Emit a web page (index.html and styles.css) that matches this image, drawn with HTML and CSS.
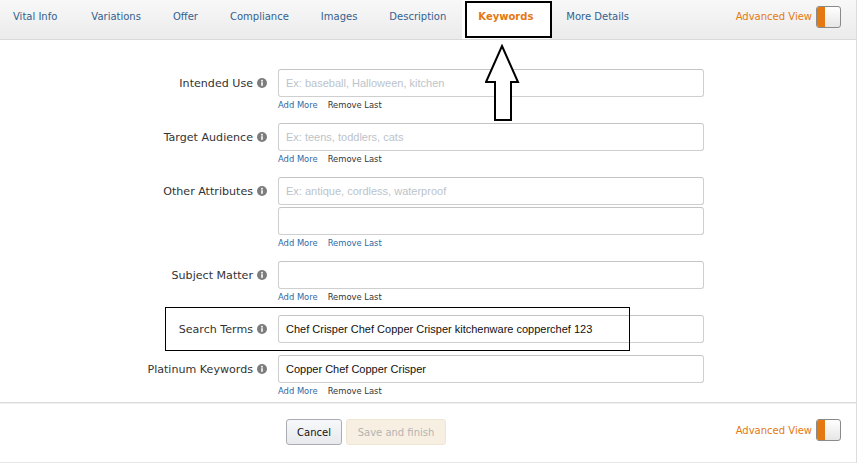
FILE: index.html
```html
<!DOCTYPE html>
<html>
<head>
<meta charset="utf-8">
<link rel="stylesheet" href="styles.css">
</head>
<body>
<div class="page">
  <nav class="tabs">
    <a class="tab">Vital Info</a>
    <a class="tab">Variations</a>
    <a class="tab">Offer</a>
    <a class="tab">Compliance</a>
    <a class="tab">Images</a>
    <a class="tab">Description</a>
    <a class="tab active">Keywords</a>
    <a class="tab">More Details</a>
    <div class="adv"><span class="adv-text">Advanced View</span><span class="toggle"><span class="toggle-on"></span></span></div>
  </nav>

  <section class="form">
    <div class="field">
      <div class="label">Intended Use <svg class="info" viewBox="0 0 10 10"><circle cx="5" cy="5" r="5" fill="#7d7d7d"/><rect x="4.2" y="4.2" width="1.6" height="3.6" fill="#fff"/><circle cx="5" cy="2.8" r="0.95" fill="#fff"/></svg></div>
      <div class="control">
        <input class="inp" placeholder="Ex: baseball, Halloween, kitchen">
        <div class="links"><a class="add">Add More</a><a class="remove">Remove Last</a></div>
      </div>
    </div>
    <div class="field">
      <div class="label">Target Audience <svg class="info" viewBox="0 0 10 10"><circle cx="5" cy="5" r="5" fill="#7d7d7d"/><rect x="4.2" y="4.2" width="1.6" height="3.6" fill="#fff"/><circle cx="5" cy="2.8" r="0.95" fill="#fff"/></svg></div>
      <div class="control">
        <input class="inp" placeholder="Ex: teens, toddlers, cats">
        <div class="links"><a class="add">Add More</a><a class="remove">Remove Last</a></div>
      </div>
    </div>
    <div class="field">
      <div class="label">Other Attributes <svg class="info" viewBox="0 0 10 10"><circle cx="5" cy="5" r="5" fill="#7d7d7d"/><rect x="4.2" y="4.2" width="1.6" height="3.6" fill="#fff"/><circle cx="5" cy="2.8" r="0.95" fill="#fff"/></svg></div>
      <div class="control">
        <input class="inp" placeholder="Ex: antique, cordless, waterproof">
        <input class="inp second">
        <div class="links"><a class="add">Add More</a><a class="add">Remove Last</a></div>
      </div>
    </div>
    <div class="field">
      <div class="label">Subject Matter <svg class="info" viewBox="0 0 10 10"><circle cx="5" cy="5" r="5" fill="#7d7d7d"/><rect x="4.2" y="4.2" width="1.6" height="3.6" fill="#fff"/><circle cx="5" cy="2.8" r="0.95" fill="#fff"/></svg></div>
      <div class="control">
        <input class="inp">
        <div class="links"><a class="add">Add More</a><a class="remove">Remove Last</a></div>
      </div>
    </div>
    <div class="field plain">
      <div class="label">Search Terms <svg class="info" viewBox="0 0 10 10"><circle cx="5" cy="5" r="5" fill="#7d7d7d"/><rect x="4.2" y="4.2" width="1.6" height="3.6" fill="#fff"/><circle cx="5" cy="2.8" r="0.95" fill="#fff"/></svg></div>
      <div class="control">
        <input class="inp" value="Chef Crisper Chef Copper Crisper kitchenware copperchef 123">
      </div>
    </div>
    <div class="field last">
      <div class="label">Platinum Keywords <svg class="info" viewBox="0 0 10 10"><circle cx="5" cy="5" r="5" fill="#7d7d7d"/><rect x="4.2" y="4.2" width="1.6" height="3.6" fill="#fff"/><circle cx="5" cy="2.8" r="0.95" fill="#fff"/></svg></div>
      <div class="control">
        <input class="inp" value="Copper Chef Copper Crisper">
        <div class="links"><a class="add">Add More</a><a class="remove">Remove Last</a></div>
      </div>
    </div>
  </section>

  <footer class="footer">
    <div class="buttons">
      <button class="btn cancel">Cancel</button>
      <button class="btn save" disabled>Save and finish</button>
    </div>
    <div class="adv"><span class="adv-text">Advanced View</span><span class="toggle"><span class="toggle-on"></span></span></div>
  </footer>

  <div class="mark mark-tab"></div>
  <div class="mark mark-search"></div>
  <svg class="arrow" viewBox="0 0 40 80"><polygon points="17,2 33,38 26,38 26,76 10,76 10,38 1,38" fill="#fff" stroke="#000" stroke-width="2" stroke-linejoin="miter"/></svg>
</div>
</body>
</html>
```

FILE: styles.css
```css
* { box-sizing: border-box; }

body {
  margin: 0;
  background: #fff;
  font-family: "DejaVu Sans", Verdana, sans-serif;
  color: #333;
}

.page {
  position: relative;
  width: 857px;
  border-right: 1px solid #dcdcdc;
}

/* Tabs */
.tabs {
  display: flex;
  align-items: flex-start;
  height: 40px;
  padding-right: 15px;
  background: linear-gradient(#f8f8f8, #ebebeb);
  border-bottom: 1px solid #d9d9d9;
}

.tab {
  display: block;
  height: 39px;
  padding: 10px 16px 0;
  font-size: 10px;
  line-height: 14px;
  color: #32618f;
  white-space: nowrap;
}

.tab:first-child { padding: 10px 18px 0 13px; }

.tab.active {
  background: #fff;
  color: #e47911;
  font-weight: bold;
  padding: 10px 17px 0 16px;
}

.adv {
  margin-left: auto;
  display: flex;
  align-items: center;
  gap: 4px;
  padding-top: 6px;
}

.adv-text {
  font-size: 10px;
  color: #e47911;
}

.tabs .adv-text { margin-top: -1px; }

.toggle {
  display: flex;
  width: 25px;
  height: 22px;
  border: 1px solid #8a8a8a;
  border-radius: 3px;
  overflow: hidden;
  background: linear-gradient(#ffffff, #e6e6e6);
}

.toggle-on {
  width: 8px;
  background: #e47911;
}

/* Form */
.form {
  padding: 29px 0 5px;
}

.field {
  display: grid;
  grid-template-columns: 267px 426px;
  column-gap: 11px;
  margin-bottom: 12px;
}

.field.last { margin-bottom: 0; }

.label {
  display: flex;
  justify-content: flex-end;
  align-items: center;
  gap: 4px;
  height: 28px;
  font-size: 11.1px;
  color: #333;
  white-space: nowrap;
}

.info {
  width: 10px;
  height: 10px;
  flex: none;
}

.control {
  display: flex;
  flex-direction: column;
}

.inp {
  display: block;
  width: 426px;
  height: 28px;
  margin: 0;
  padding: 0 7px;
  border: 1px solid #cfcfcf;
  border-top-color: #c4c4c4;
  border-radius: 3px;
  font-family: "Liberation Sans", Arial, sans-serif;
  font-size: 11px;
  color: #111;
  background: #fff;
  outline: none;
}

.inp::placeholder { color: #bcc3ca; }

.inp.second { margin-top: 2px; }

.links {
  display: flex;
  gap: 10px;
  padding-top: 3px;
  height: 14px;
  font-size: 8.4px;
  line-height: 11px;
}

.add { color: #2b6aa8; }
.remove { color: #333; }

/* Footer */
.footer {
  display: flex;
  align-items: flex-start;
  height: 61px;
  padding: 16px 15px 0 286px;
  border-top: 1px solid #dcdcdc;
  border-bottom: 1px solid #e6e6e6;
  box-shadow: inset 0 1px 0 #f0f0f0;
}

.footer .adv { padding-top: 0; }

.buttons {
  display: flex;
  gap: 4px;
}

.btn {
  height: 26px;
  margin: 0;
  border-radius: 3px;
  font-family: "DejaVu Sans", Verdana, sans-serif;
  font-size: 10px;
}

.cancel {
  width: 56px;
  padding: 0;
  color: #111;
  border: 1px solid #a9adb3;
  background: linear-gradient(#f7f8fa, #e7e9ec);
}

.save {
  width: 100px;
  padding: 0;
  color: #b3b3b3;
  border: 1px solid #efe6d3;
  background: #f7f0e2;
}

/* Annotations */
.mark {
  position: absolute;
  border: 1px solid #000;
}

.mark-tab {
  left: 465px;
  top: 1px;
  width: 87px;
  height: 37px;
  border-width: 2px;
}

.mark-search {
  left: 165px;
  top: 307px;
  width: 465px;
  height: 44px;
}

.arrow {
  position: absolute;
  left: 485px;
  top: 44px;
  width: 40px;
  height: 80px;
}
```
